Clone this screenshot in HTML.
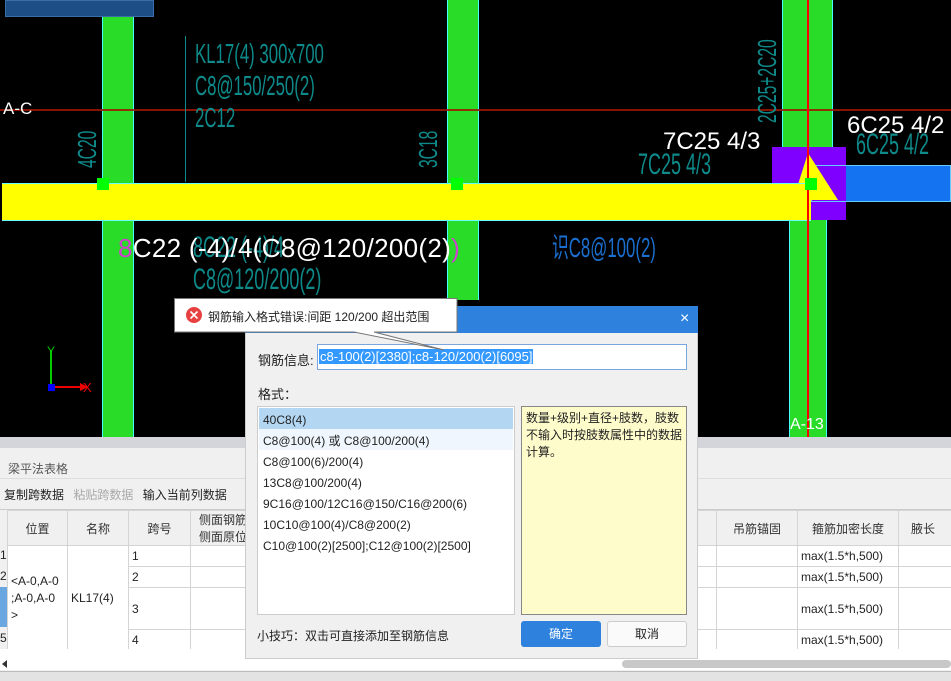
<!DOCTYPE html>
<html><head><meta charset="utf-8"><style>
*{margin:0;padding:0;box-sizing:border-box}
body{width:951px;height:681px;overflow:hidden;position:relative;background:#000;font-family:"Liberation Sans","Noto Sans CJK SC",sans-serif;font-size:12px;color:#222}
.a{position:absolute}
.cad{font-family:"Liberation Sans Narrow","Liberation Sans",sans-serif;color:#0e8a8a;white-space:nowrap;transform-origin:0 0}
.w{color:#fff;white-space:nowrap}
td,th{border:1px solid #d4d4d4;font-weight:normal;overflow:hidden;white-space:nowrap}
</style></head><body>
<div class="a" style="left:5px;top:0;width:149px;height:17px;background:#1d4f86;border:1px solid #3b6ea8"></div>
<div class="a" style="left:102px;top:17px;width:32px;height:420px;background:#28dc28;border-left:1px solid #4ff;border-right:1px solid #4ff"></div>
<div class="a" style="left:447px;top:0;width:32px;height:300px;background:#28dc28;border-left:1px solid #4ff;border-right:1px solid #4ff"></div>
<div class="a" style="left:782px;top:0;width:51px;height:150px;background:#28dc28;border-left:1px solid #4ff;border-right:1px solid #4ff"></div>
<div class="a" style="left:789px;top:218px;width:38px;height:220px;background:#28dc28;border-left:1px solid #4ff;border-right:1px solid #4ff"></div>
<div class="a" style="left:0;top:109px;width:951px;height:2px;background:rgba(160,20,0,.85)"></div>
<div class="a" style="left:811px;top:165px;width:140px;height:37px;background:#1473f0;border:1px solid #6cf"></div>
<div class="a" style="left:772px;top:147px;width:74px;height:73px;background:#8000ff"></div>
<div class="a" style="left:811px;top:165px;width:35px;height:37px;border:1px solid #6cf;border-right:none"></div>
<svg class="a" style="left:780px;top:150px" width="70" height="55"><polygon points="28,3 13,50 58,50" fill="#ff0"/></svg>
<div class="a" style="left:2px;top:183px;width:809px;height:38px;background:#ff0;border-top:1px solid #6ff;border-bottom:1px solid #6ff"></div>
<div class="a" style="left:807px;top:0;width:2px;height:437px;background:#f00"></div>
<div class="a" style="left:97px;top:178px;width:12px;height:12px;background:#0f0"></div>
<div class="a" style="left:451px;top:178px;width:12px;height:12px;background:#0f0"></div>
<div class="a" style="left:805px;top:178px;width:12px;height:12px;background:#0f0"></div>
<div class="a cad" style="left:195px;top:38px;font-size:28px;line-height:32px;transform:scaleX(.6)">KL17(4) 300x700<br>C8@150/250(2)<br>2C12</div>
<div class="a" style="left:185px;top:36px;width:1px;height:146px;background:#0e8a8a"></div>
<div class="a cad" style="left:72px;top:168px;font-size:26px;transform:rotate(-90deg) scaleX(.6)">4C20</div>
<div class="a cad" style="left:413px;top:168px;font-size:26px;transform:rotate(-90deg) scaleX(.6)">3C18</div>
<div class="a cad" style="left:752px;top:123px;font-size:26px;transform:rotate(-90deg) scaleX(.6)">2C25+2C20</div>
<div class="a cad" style="left:638px;top:148px;font-size:30px;transform:scaleX(.6)">7C25 4/3</div>
<div class="a cad" style="left:856px;top:128px;font-size:30px;transform:scaleX(.6)">6C25 4/2</div>
<div class="a cad" style="left:193px;top:232px;font-size:30px;line-height:32px;transform:scaleX(.6)">8C22 (-4)/4<br>C8@120/200(2)</div>
<div class="a cad" style="left:552px;top:226px;font-size:28px;color:#1a6fd0;transform:scaleX(.6)">识C8@100(2)</div>
<div class="a w" style="left:118px;top:233px;font-size:26px;letter-spacing:.3px"><span style="color:#d040d0">8</span>C22 (-4)/4(C8@120/200(2)<span style="color:#d040d0">)</span></div>
<div class="a w" style="left:663px;top:128px;font-size:24px">7C25 4/3</div>
<div class="a w" style="left:847px;top:112px;font-size:24px">6C25 4/2</div>
<div class="a w" style="left:3px;top:99px;font-size:17px">A-C</div>
<div class="a w" style="left:790px;top:416px;font-size:16px">A-13</div>
<svg class="a" style="left:40px;top:345px" width="60" height="50"><line x1="11" y1="5" x2="11" y2="42" stroke="#0c0" stroke-width="2"/><line x1="11" y1="42" x2="40" y2="42" stroke="#e00" stroke-width="2"/><polygon points="40,38 48,42 40,46" fill="#e00"/><rect x="8" y="39" width="7" height="7" fill="#00f"/><text x="7" y="10" fill="#0c0" font-size="12" font-family="Liberation Sans">Y</text><text x="43" y="47" fill="#e00" font-size="13" font-family="Liberation Sans">X</text></svg>
<div class="a" style="left:0;top:437px;width:951px;height:244px;background:#f0f0f0"></div>
<div class="a" style="left:0;top:437px;width:951px;height:11px;background:#d4d5da"></div>
<div class="a" style="left:8px;top:460px;color:#555;font-size:12px">梁平法表格</div>
<div class="a" style="left:0;top:478px;width:951px;height:1px;background:#ddd"></div>
<div class="a" style="left:4px;top:486px;font-size:12px">复制跨数据 <span style="color:#aaa;margin-left:6px">粘贴跨数据</span> <span style="margin-left:6px">输入当前列数据</span></div>
<div class="a" style="left:0;top:509px;width:951px;height:1px;background:#ccc"></div>
<table class="a" style="left:7px;top:510px;border-collapse:collapse;background:#fff;font-size:12px;table-layout:fixed;width:960px">
<colgroup><col style="width:60px"><col style="width:61px"><col style="width:62px"><col style="width:526px"><col style="width:81px"><col style="width:101px"><col style="width:69px"></colgroup>
<tr style="height:34px;background:#f0f0f0;color:#333"><th>位置</th><th>名称</th><th>跨号</th><th style="text-align:left;padding-left:8px">侧面钢筋<br>侧面原位</th><th>吊筋锚固</th><th>箍筋加密长度</th><th style="text-align:left;padding-left:12px">腋长</th></tr>
<tr style="height:21px"><td rowspan="4" style="vertical-align:middle;padding-left:3px;line-height:17px">&lt;A-0,A-0<br>;A-0,A-0<br>&gt;</td><td rowspan="4" style="padding-left:3px">KL17(4)</td><td style="padding-left:3px">1</td><td></td><td></td><td style="padding-left:3px">max(1.5*h,500)</td><td></td></tr>
<tr style="height:21px"><td style="padding-left:3px">2</td><td></td><td></td><td style="padding-left:3px">max(1.5*h,500)</td><td></td></tr>
<tr style="height:42px"><td style="padding-left:3px">3</td><td></td><td></td><td style="padding-left:3px">max(1.5*h,500)</td><td></td></tr>
<tr style="height:21px"><td style="padding-left:3px">4</td><td></td><td></td><td style="padding-left:3px">max(1.5*h,500)</td><td></td></tr>
</table>
<div class="a" style="left:0;top:545px;font-size:12px;line-height:21px">1<br>2</div>
<div class="a" style="left:0;top:587px;width:7px;height:40px;background:#6aa7e0"></div>
<div class="a" style="left:0;top:628px;font-size:12px;line-height:21px">5</div>
<div class="a" style="left:0;top:649px;width:951px;height:21px;background:#fff"></div>
<div class="a" style="left:622px;top:660px;width:329px;height:8px;background:#c8c8c8;border-radius:4px"></div>
<div class="a" style="left:2px;top:660px;border-right:5px solid #333;border-top:4px solid transparent;border-bottom:4px solid transparent"></div>
<div class="a" style="left:0;top:671px;width:951px;height:10px;background:#e3e3e3;border-top:1px solid #bbb"></div>
<div class="a" style="left:245px;top:306px;width:453px;height:353px;background:#f0f0f0;border:1px solid #ccc"></div>
<div class="a" style="left:245px;top:306px;width:453px;height:27px;background:#2e82de"></div>
<div class="a" style="left:680px;top:310px;color:#fff;font-size:16px">×</div>
<div class="a" style="left:258px;top:350px;font-size:13px">钢筋信息:</div>
<div class="a" style="left:317px;top:344px;width:370px;height:26px;background:#fff;border:1px solid #7aa6e0"></div>
<div class="a" style="left:319px;top:349px;background:#3399ff;color:#fff;font-size:13px;padding:0 1px">c8-100(2)[2380];c8-120/200(2)[6095]</div>
<div class="a" style="left:258px;top:384px;font-size:13px">格式：</div>
<div class="a" style="left:257px;top:406px;width:258px;height:209px;background:#fff;border:1px solid #ccc"></div>
<div class="a" style="left:259px;top:408px;width:254px;height:21px;background:#b3d7f3"></div>
<div class="a" style="left:259px;top:429px;width:254px;height:21px;background:#eff6fd"></div>
<div class="a" style="left:263px;top:410px;font-size:12px;line-height:21px">40C8(4)<br>C8@100(4) 或 C8@100/200(4)<br>C8@100(6)/200(4)<br>13C8@100/200(4)<br>9C16@100/12C16@150/C16@200(6)<br>10C10@100(4)/C8@200(2)<br>C10@100(2)[2500];C12@100(2)[2500]</div>
<div class="a" style="left:521px;top:406px;width:166px;height:209px;background:#fffccc;border:1px solid #888;padding:3px 4px;font-size:12px;line-height:17px">数量+级别+直径+肢数，肢数不输入时按肢数属性中的数据计算。</div>
<div class="a" style="left:257px;top:627px;font-size:12px">小技巧：双击可直接添加至钢筋信息</div>
<div class="a" style="left:521px;top:621px;width:80px;height:26px;background:#2e82de;border-radius:3px;color:#fff;text-align:center;line-height:26px">确定</div>
<div class="a" style="left:607px;top:621px;width:80px;height:26px;background:#fafafa;border:1px solid #ccc;border-radius:3px;text-align:center;line-height:24px">取消</div>
<svg class="a" style="left:174px;top:298px" width="290" height="56"><polygon points="0.5,0.5 283,0.5 283,34 200,34 270,52 180,34 0.5,34" fill="#fff" stroke="#777"/><circle cx="20" cy="17" r="8" fill="#e84040"/><path d="M16.5 13.5l7 7M23.5 13.5l-7 7" stroke="#fff" stroke-width="1.6"/></svg>
<div class="a" style="left:208px;top:308px;font-size:12px">钢筋输入格式错误:间距 120/200 超出范围</div>
</body></html>
